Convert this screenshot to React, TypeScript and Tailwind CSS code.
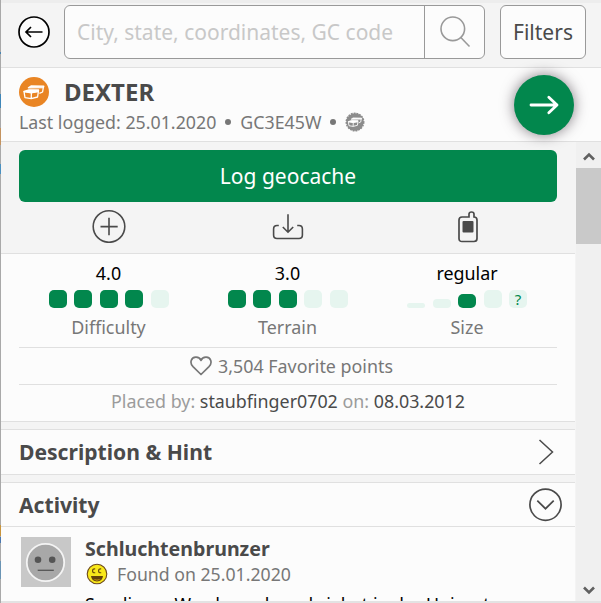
import React from "react";

function Rating({ value, label, filled }: { value: string; label: string; filled: number }) {
  return (
    <div className="flex w-[179px] flex-col items-center">
      <div className="h-[24px] text-[17.9px] leading-[24px] text-black">{value}</div>
      <div className="mt-[5px] flex w-[120px] justify-between">
        {[1, 2, 3, 4, 5].map((n) => (
          <span key={n} className={n <= filled ? "h-[18px] w-[18px] rounded-[5px] bg-[#02874d]" : "h-[18px] w-[18px] rounded-[5px] bg-[#e6f5ef]"} />
        ))}
      </div>
      <div className="mt-[7px] text-[17.9px] leading-[24px] text-[#777]">{label}</div>
    </div>
  );
}

function SizeRating() {
  return (
    <div className="flex w-[180px] flex-col items-center">
      <div className="h-[24px] text-[17.9px] leading-[24px] text-black">regular</div>
      <div className="mt-[5px] flex h-[18px] w-[120px] items-end justify-between">
        <span className="h-[5px] w-[18px] rounded-[3px] bg-[#e6f5ef]" />
        <span className="h-[9px] w-[18px] rounded-[4px] bg-[#e6f5ef]" />
        <span className="h-[14px] w-[18px] rounded-[5px] bg-[#02874d]" />
        <span className="h-[18px] w-[18px] rounded-[5px] bg-[#e6f5ef]" />
        <span className="h-[18px] w-[18px] rounded-[5px] bg-[#e6f5ef] text-center text-[15px] leading-[19px] text-[#02874d]">?</span>
      </div>
      <div className="mt-[7px] text-[17.9px] leading-[24px] text-[#777]">Size</div>
    </div>
  );
}

function CacheMark() {
  return (
    <g fill="none" stroke="#fff" strokeWidth="1.3" strokeLinejoin="round">
      <path d="M5 14.6 L12.2 15.8 L19.4 14.4 L18.6 20 L12.2 21.6 L6 20.6 Z M12.4 15.8 L12.2 21.6" />
      <path d="M5 14.4 L10 12.8 L19.6 13 L19.4 14.4 L12.4 15.6 Z" fill="#fff" />
      <path d="M9.4 10.8 L12 9 L24.8 9.2 L24.4 10.6 Z" fill="#fff" />
      <path d="M24.4 10 L23.6 15 L20.4 16.4" />
    </g>
  );
}

export default function App() {
  return (
    <div className="flex h-[603px] w-[601px] overflow-hidden font-['Noto_Sans',sans-serif] text-[#4a4a4a]">
      <div className="flex w-px shrink-0 flex-col bg-[#a9a9a9]">
        <span className="mt-[52px] h-[2px] bg-[#4a84b0]" />
        <span className="mt-[40px] h-[14px] bg-[#3f86b8]" />
        <span className="mt-[20px] h-[17px] bg-[#c4935f]" />
        <span className="mt-[19px] h-[10px] bg-[#4a90c0]" />
        <span className="mt-[351px] h-[11px] bg-[#c8943c]" />
        <span className="mt-[1px] h-[6px] bg-[#4a78b0]" />
        <span className="mt-[18px] h-[18px] bg-[#6a94b4]" />
      </div>
      <div className="flex w-[600px] shrink-0 flex-col bg-[#f4f4f4]">
        <header className="flex h-[68px] shrink-0 items-start border-b border-[#e0e0e0] pt-[5px] pl-[17px] shadow-[inset_0_3px_0_#ededed]">
          <svg width="32" height="32" viewBox="0 0 32 32" className="mt-[11px]" fill="none" stroke="#000" strokeWidth="1.7">
            <circle cx="16" cy="16" r="15" fill="#fcfcfc" />
            <path d="M24.5 16 H8.5 M13 11 L8 16 L13 21" />
          </svg>
          <div className="ml-[14px] flex h-[54px] w-[421px] rounded-[6px] border border-[#999] bg-[#fcfcfc]">
            <div className="w-[360px] border-r border-[#999] pl-[12px] text-[21px] leading-[52px] whitespace-nowrap text-[#c8c8c8]">City, state, coordinates, GC code</div>
            <svg width="32" height="34" viewBox="0 0 32 34" className="mt-[9px] ml-[14px]" fill="none" stroke="#999" strokeWidth="1.6">
              <circle cx="13.8" cy="13.8" r="11.8" />
              <path d="M21.6 22.3 L30.5 31.5" />
            </svg>
          </div>
          <div className="ml-[15px] h-[54px] w-[86px] rounded-[6px] border border-[#999] bg-[#fcfcfc] text-center text-[21px] leading-[52px]">Filters</div>
        </header>

        <section className="flex h-[74px] shrink-0 justify-between border-b border-[#e0e0e0] bg-[#fcfcfc] pr-[27px] pl-[18px]">
          <div>
            <div className="flex h-[42px] items-start pt-[9px]">
              <svg width="30" height="30" viewBox="0 0 30 30">
                <circle cx="15" cy="15" r="15" fill="#e98524" />
                <CacheMark />
              </svg>
              <h1 className="ml-[15px] text-[24px] leading-[30px] font-bold">DEXTER</h1>
            </div>
            <div className="flex h-[24px] items-center text-[17.8px] leading-[24px] whitespace-nowrap text-[#777]">
              <span>Last logged: 25.01.2020</span>
              <span className="mx-[9px] h-[6px] w-[6px] rounded-full bg-[#777]" />
              <span>GC3E45W</span>
              <span className="mx-[9px] h-[6px] w-[6px] rounded-full bg-[#777]" />
              <svg width="20" height="20" viewBox="0 0 30 30">
                <circle cx="15" cy="15" r="13" fill="#8c8c8c" stroke="#8c8c8c" strokeWidth="2.4" strokeDasharray="2.8 1.4" />
                <CacheMark />
              </svg>
            </div>
          </div>
          <button className="relative z-10 mt-[7px] flex h-[60px] w-[60px] items-center justify-center rounded-full bg-[#02874d] shadow-[0_0_14px_rgba(50,40,50,0.6)]">
            <svg width="30" height="22" viewBox="0 0 30 22" fill="none" stroke="#fff" strokeWidth="2.8" strokeLinecap="round" strokeLinejoin="round">
              <path d="M2 11 H28 M19.8 3.2 L28 11 L19.8 18.8" />
            </svg>
          </button>
        </section>

        <div className="flex h-[459px] shrink-0 justify-between overflow-hidden">
          <main className="w-[574px] shrink-0">
            <div className="h-[111px] pt-[8px]">
              <button className="mx-[18px] block h-[52px] w-[538px] rounded-[6px] bg-[#02874d] text-center text-[21px] leading-[52px] text-white">Log geocache</button>
              <div className="flex px-[18px] pt-[7px]">
                <div className="flex w-[179px] justify-center">
                  <svg width="34" height="34" viewBox="0 0 34 34" fill="none" stroke="#4a4a4a" strokeWidth="1.6">
                    <circle cx="17" cy="17.5" r="15.8" />
                    <path d="M17 8.8 V26.3 M8.5 17.6 H25.7" />
                  </svg>
                </div>
                <div className="flex w-[179px] justify-center">
                  <svg width="32" height="32" viewBox="0 0 32 32" fill="none" stroke="#4a4a4a" strokeWidth="1.6">
                    <path d="M6.8 16.5 H5 Q1.6 16.5 1.6 20 V26 Q1.6 29.5 5 29.5 H27 Q30.4 29.5 30.4 26 V20 Q30.4 16.5 27 16.5 H25.2 M16 5.3 V23 M10.8 18 L16 23.2 L21.2 18" />
                  </svg>
                </div>
                <div className="flex w-[180px] justify-center pl-[1px]">
                  <svg width="20" height="34" viewBox="0 0 20 34" fill="none" stroke="#4a4a4a" strokeWidth="1.7">
                    <path d="M11 8 V5.3 Q11 3 13.5 3 Q16 3 16 5.3 V8 Q19 8 19 11 V29.5 Q19 32.5 16 32.5 H4 Q1 32.5 1 29.5 V11 Q1 8 4 8 Z" />
                    <rect x="4.5" y="12" width="11" height="11.5" rx="1" fill="#4a4a4a" stroke="none" />
                  </svg>
                </div>
              </div>
            </div>

            <section className="h-[169px] border-y border-[#e0e0e0] bg-[#fcfcfc] px-[18px]">
              <div className="flex h-[94px] border-b border-[#e0e0e0] pt-[7px]">
                <Rating value="4.0" label="Difficulty" filled={4} />
                <Rating value="3.0" label="Terrain" filled={3} />
                <SizeRating />
              </div>
              <div className="flex h-[37px] items-center justify-center border-b border-[#e0e0e0] pl-[7px] text-[17.85px] text-[#777]">
                <svg width="22" height="20" viewBox="0 0 22 20" className="mr-[6px]" fill="none" stroke="#777" strokeWidth="1.7" strokeLinejoin="round">
                  <path d="M11 18.5 L3 10.7 C-0.8 6.8 1.2 1.4 5.8 1.2 C8.3 1.1 10.2 2.4 11 4.4 C11.8 2.4 13.7 1.1 16.2 1.2 C20.8 1.4 22.8 6.8 19 10.7 Z" />
                </svg>
                <span>3,504 Favorite points</span>
              </div>
              <div className="text-center text-[17.85px] leading-[33px] text-[#9b9b9b]">
                Placed by: <span className="text-[#4a4a4a]">staubfinger0702</span> on: <span className="text-[#4a4a4a]">08.03.2012</span>
              </div>
            </section>

            <section className="mt-[7px] flex h-[46px] items-center justify-between border-y border-[#e0e0e0] bg-[#fcfcfc] pr-[21px] pl-[18px]">
              <h2 className="text-[21.1px] leading-[32px] font-bold">Description &amp; Hint</h2>
              <svg width="16" height="28" viewBox="0 0 16 28" fill="none" stroke="#4a4a4a" strokeWidth="1.5">
                <path d="M1.5 2 L14.5 14 L1.5 26" />
              </svg>
            </section>

            <section className="mt-[7px] h-[130px] border-t border-[#e0e0e0] bg-[#fcfcfc]">
              <div className="flex h-[44px] items-center justify-between border-b border-[#e0e0e0] pr-[12px] pl-[18px]">
                <h2 className="pt-[1px] text-[21.1px] font-bold">Activity</h2>
                <svg width="34" height="34" viewBox="0 0 34 34" fill="none" stroke="#4a4a4a" strokeWidth="1.7">
                  <circle cx="16.5" cy="16.7" r="15.6" />
                  <path d="M8.3 12.7 L16.5 20.7 L24.7 12.7" />
                </svg>
              </div>
              <div className="flex pt-[10px] pl-[20px]">
                <svg width="50" height="50" viewBox="0 0 50 50">
                  <rect width="50" height="50" fill="#c8c8c8" />
                  <circle cx="24.5" cy="25.5" r="18.7" fill="#a8a8a8" stroke="#f4f4f4" strokeWidth="1.8" />
                  <circle cx="17" cy="22.7" r="3.3" fill="#555" />
                  <circle cx="31.2" cy="22.7" r="3.3" fill="#555" />
                  <path d="M16.7 33.3 H32.8" stroke="#555" strokeWidth="1.3" />
                </svg>
                <div className="ml-[14px] whitespace-nowrap">
                  <div className="h-[25px] text-[19.6px] leading-[24px] font-bold">Schluchtenbrunzer</div>
                  <div className="flex h-[25px] items-center text-[17.7px] leading-[25px] text-[#777]">
                    <svg width="22" height="22" viewBox="0 0 22 22" className="mr-[9px] mb-[2px] ml-[1px]">
                      <circle cx="11" cy="11" r="9.8" fill="#f9e81a" stroke="#6b481c" strokeWidth="1.1" />
                      <path d="M9.2 6 Q6.4 5.5 6.6 8 Q6.6 10 9.2 9.7 M15.2 6 Q12.4 5.5 12.6 8 Q12.6 10 15.2 9.7" fill="none" stroke="#69480a" strokeWidth="1.2" />
                      <path d="M5 13 H17 Q16.5 18.4 11 18.4 Q5.5 18.4 5 13 Z" fill="#65430b" />
                      <path d="M7 15.8 Q11 17.5 15 15.8 Q11 19.2 7 15.8" fill="#f9c11b" />
                    </svg>
                    <span>Found on 25.01.2020</span>
                  </div>
                  <div className="mt-[5px] text-[17.8px] leading-[24px] text-black">Sondierag Wurdo nach und ziehet in der Unigrot</div>
                </div>
              </div>
            </section>
          </main>

          <aside className="flex w-[25px] shrink-0 flex-col items-center bg-[#f0f0f0]">
            <svg width="12" height="26" viewBox="0 0 12 26" fill="none" stroke="#606060" strokeWidth="2.6">
              <path d="M1 17.5 L6 12.5 L11 17.5" />
            </svg>
            <div className="h-[76px] w-full bg-[#c9c9c9]" />
            <svg width="12" height="26" viewBox="0 0 12 26" className="mt-auto" fill="none" stroke="#606060" strokeWidth="2.6">
              <path d="M1 12.5 L6 17.5 L11 12.5" />
            </svg>
          </aside>
        </div>
        <div className="h-[2px] shrink-0 bg-[#e3e3e3]" />
      </div>
    </div>
  );
}
